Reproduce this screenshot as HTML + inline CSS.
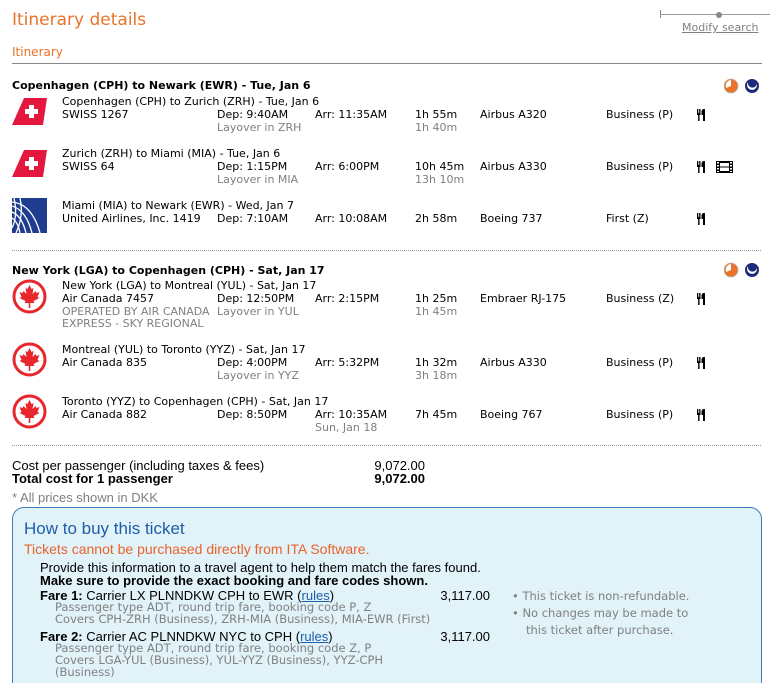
<!DOCTYPE html>
<html><head><meta charset="utf-8"><style>
*{margin:0;padding:0;box-sizing:border-box}
html,body{width:770px;height:683px;overflow:hidden}
body{background:#fff;font-family:"DejaVu Sans",Verdana,sans-serif;font-size:11px;color:#000;position:relative}
.a{position:absolute;white-space:nowrap;line-height:13px}
.g{color:#808080}
.b{font-weight:bold}
.o{color:#e8732a}
.dot{position:absolute;left:12px;width:749px;border-top:1px dotted #999}
.box{position:absolute;left:12px;top:507px;width:750px;height:190px;background:#e1f2f9;border:1px solid #3a7bbf;border-radius:12px}
.t{font-family:"Liberation Sans",Arial,sans-serif;font-size:13px;line-height:13px;position:absolute;white-space:nowrap}
.s{color:#808080;font-family:"DejaVu Sans",sans-serif;font-size:11.5px}
.r{text-align:right}
</style></head><body>
<div class="a o" style="left:12px;top:9px;font-size:17px;line-height:22px">Itinerary details</div>
<div style="position:absolute;left:660px;top:10px;width:1px;height:8px;background:#888"></div>
<div style="position:absolute;left:660px;top:14px;width:110px;height:1px;background:#999"></div>
<div style="position:absolute;left:716px;top:12px;width:6px;height:6px;border-radius:50%;background:#888"></div>
<div class="a g" style="left:682px;top:21px;text-decoration:underline">Modify search</div>
<div class="a o" style="left:12px;top:45px;font-size:12px;line-height:15px">Itinerary</div>
<div style="position:absolute;left:12px;top:63px;width:750px;height:1px;background:#888"></div>

<svg style="position:absolute;left:724px;top:78px" width="36" height="16">
<circle cx="7" cy="8" r="7" fill="#e8732a"/><path d="M7 8V2A6 6 0 0 0 2 10Z" fill="#fff"/><circle cx="7" cy="8" r="7" fill="none" stroke="#bbb" stroke-width="0.8"/>
<circle cx="28" cy="8" r="7" fill="#1d2a7a"/><path d="M24 4A5 5 0 1 0 33 6A4 4 0 1 1 24 4Z" fill="#fff"/>
</svg>
<svg style="position:absolute;left:724px;top:262px" width="36" height="16">
<circle cx="7" cy="8" r="7" fill="#e8732a"/><path d="M7 8V2A6 6 0 0 0 2 10Z" fill="#fff"/><circle cx="7" cy="8" r="7" fill="none" stroke="#bbb" stroke-width="0.8"/>
<circle cx="28" cy="8" r="7" fill="#1d2a7a"/><path d="M24 4A5 5 0 1 0 33 6A4 4 0 1 1 24 4Z" fill="#fff"/>
</svg>

<div class="a b" style="left:12px;top:79px">Copenhagen (CPH) to Newark (EWR) - Tue, Jan 6</div>

<svg style="position:absolute;left:12px;top:98px" width="36" height="28"><path d="M12 0H35L31 27H0Z" fill="#e4173e"/><path d="M17 7h5v4h4v5h-4v4h-5v-4h-4v-5h4Z" fill="#fff"/></svg>
<div class="a" style="left:62px;top:95px">Copenhagen (CPH) to Zurich (ZRH) - Tue, Jan 6</div>
<div class="a" style="left:62px;top:108px">SWISS 1267</div>
<div class="a" style="left:217px;top:108px">Dep: 9:40AM</div>
<div class="a g" style="left:217px;top:121px">Layover in ZRH</div>
<div class="a" style="left:315px;top:108px">Arr: 11:35AM</div>
<div class="a" style="left:415px;top:108px">1h 55m</div>
<div class="a g" style="left:415px;top:121px">1h 40m</div>
<div class="a" style="left:480px;top:108px">Airbus A320</div>
<div class="a" style="left:606px;top:108px">Business (P)</div>

<svg style="position:absolute;left:12px;top:150px" width="36" height="28"><path d="M12 0H35L31 27H0Z" fill="#e4173e"/><path d="M17 7h5v4h4v5h-4v4h-5v-4h-4v-5h4Z" fill="#fff"/></svg>
<div class="a" style="left:62px;top:147px">Zurich (ZRH) to Miami (MIA) - Tue, Jan 6</div>
<div class="a" style="left:62px;top:160px">SWISS 64</div>
<div class="a" style="left:217px;top:160px">Dep: 1:15PM</div>
<div class="a g" style="left:217px;top:173px">Layover in MIA</div>
<div class="a" style="left:315px;top:160px">Arr: 6:00PM</div>
<div class="a" style="left:415px;top:160px">10h 45m</div>
<div class="a g" style="left:415px;top:173px">13h 10m</div>
<div class="a" style="left:480px;top:160px">Airbus A330</div>
<div class="a" style="left:606px;top:160px">Business (P)</div>

<svg style="position:absolute;left:12px;top:198px" width="35" height="35"><rect width="35" height="35" fill="#1f3d8f"/><g stroke="#fff" stroke-width="1.3" fill="none"><path d="M0 8Q14 12 20 35"/><path d="M0 14Q10 18 14 35"/><path d="M0 20Q6 24 8 35"/><path d="M0 4Q20 6 28 35"/><path d="M2 0Q6 18 0 30"/><path d="M8 0Q12 18 4 35"/></g></svg>
<div class="a" style="left:62px;top:199px">Miami (MIA) to Newark (EWR) - Wed, Jan 7</div>
<div class="a" style="left:62px;top:212px">United Airlines, Inc. 1419</div>
<div class="a" style="left:217px;top:212px">Dep: 7:10AM</div>
<div class="a" style="left:315px;top:212px">Arr: 10:08AM</div>
<div class="a" style="left:415px;top:212px">2h 58m</div>
<div class="a" style="left:480px;top:212px">Boeing 737</div>
<div class="a" style="left:606px;top:212px">First (Z)</div>

<div class="dot" style="top:250px"></div>

<div class="a b" style="left:12px;top:264px">New York (LGA) to Copenhagen (CPH) - Sat, Jan 17</div>

<svg style="position:absolute;left:12px;top:279px" width="35" height="35"><circle cx="17.5" cy="17.5" r="15.5" fill="none" stroke="#e8272c" stroke-width="3"/><path d="M17.5 6l2 4 2-1-1 6 3-3 1 2 3-1-2 5 2 1-6 3 1 2h-4.2v5h-1.6v-5h-4.2l1-2-6-3 2-1-2-5 3 1 1-2 3 3-1-6 2 1Z" fill="#e8272c"/></svg>
<svg style="position:absolute;left:12px;top:342px" width="35" height="35"><circle cx="17.5" cy="17.5" r="15.5" fill="none" stroke="#e8272c" stroke-width="3"/><path d="M17.5 6l2 4 2-1-1 6 3-3 1 2 3-1-2 5 2 1-6 3 1 2h-4.2v5h-1.6v-5h-4.2l1-2-6-3 2-1-2-5 3 1 1-2 3 3-1-6 2 1Z" fill="#e8272c"/></svg>
<svg style="position:absolute;left:12px;top:394px" width="35" height="35"><circle cx="17.5" cy="17.5" r="15.5" fill="none" stroke="#e8272c" stroke-width="3"/><path d="M17.5 6l2 4 2-1-1 6 3-3 1 2 3-1-2 5 2 1-6 3 1 2h-4.2v5h-1.6v-5h-4.2l1-2-6-3 2-1-2-5 3 1 1-2 3 3-1-6 2 1Z" fill="#e8272c"/></svg>

<div class="a" style="left:62px;top:279px">New York (LGA) to Montreal (YUL) - Sat, Jan 17</div>
<div class="a" style="left:62px;top:292px">Air Canada 7457</div>
<div class="a g" style="left:62px;top:305px">OPERATED BY AIR CANADA</div>
<div class="a g" style="left:62px;top:317px">EXPRESS - SKY REGIONAL</div>
<div class="a" style="left:217px;top:292px">Dep: 12:50PM</div>
<div class="a g" style="left:217px;top:305px">Layover in YUL</div>
<div class="a" style="left:315px;top:292px">Arr: 2:15PM</div>
<div class="a" style="left:415px;top:292px">1h 25m</div>
<div class="a g" style="left:415px;top:305px">1h 45m</div>
<div class="a" style="left:480px;top:292px">Embraer RJ-175</div>
<div class="a" style="left:606px;top:292px">Business (Z)</div>

<div class="a" style="left:62px;top:343px">Montreal (YUL) to Toronto (YYZ) - Sat, Jan 17</div>
<div class="a" style="left:62px;top:356px">Air Canada 835</div>
<div class="a" style="left:217px;top:356px">Dep: 4:00PM</div>
<div class="a g" style="left:217px;top:369px">Layover in YYZ</div>
<div class="a" style="left:315px;top:356px">Arr: 5:32PM</div>
<div class="a" style="left:415px;top:356px">1h 32m</div>
<div class="a g" style="left:415px;top:369px">3h 18m</div>
<div class="a" style="left:480px;top:356px">Airbus A330</div>
<div class="a" style="left:606px;top:356px">Business (P)</div>

<div class="a" style="left:62px;top:395px">Toronto (YYZ) to Copenhagen (CPH) - Sat, Jan 17</div>
<div class="a" style="left:62px;top:408px">Air Canada 882</div>
<div class="a" style="left:217px;top:408px">Dep: 8:50PM</div>
<div class="a" style="left:315px;top:408px">Arr: 10:35AM</div>
<div class="a g" style="left:315px;top:421px">Sun, Jan 18</div>
<div class="a" style="left:415px;top:408px">7h 45m</div>
<div class="a" style="left:480px;top:408px">Boeing 767</div>
<div class="a" style="left:606px;top:408px">Business (P)</div>

<svg width="0" height="0" style="position:absolute"><defs><g id="m"><rect x="0" y="0" width="1.3" height="5"/><rect x="2.2" y="0" width="1.3" height="5"/><rect x="0" y="4" width="3.5" height="2"/><rect x="1.1" y="5" width="1.4" height="7"/><path d="M6 0h2v12h-2v-6h-1.5v-4Z"/></g><g id="f"><rect x="0" y="0" width="17" height="12" fill="#000"/><rect x="4" y="2" width="9" height="3.5" fill="#fff"/><rect x="4" y="6.5" width="9" height="3.5" fill="#fff"/><rect x="1" y="1" width="2" height="1.5" fill="#fff"/><rect x="1" y="4" width="2" height="1.5" fill="#fff"/><rect x="1" y="7" width="2" height="1.5" fill="#fff"/><rect x="1" y="10" width="2" height="1" fill="#fff"/><rect x="14" y="1" width="2" height="1.5" fill="#fff"/><rect x="14" y="4" width="2" height="1.5" fill="#fff"/><rect x="14" y="7" width="2" height="1.5" fill="#fff"/><rect x="14" y="10" width="2" height="1" fill="#fff"/></g></defs></svg>
<svg style="position:absolute;left:697px;top:109px" width="9" height="12"><use href="#m"/></svg>
<svg style="position:absolute;left:697px;top:161px" width="9" height="12"><use href="#m"/></svg>
<svg style="position:absolute;left:716px;top:161px" width="17" height="12"><use href="#f"/></svg>
<svg style="position:absolute;left:697px;top:213px" width="9" height="12"><use href="#m"/></svg>
<svg style="position:absolute;left:697px;top:293px" width="9" height="12"><use href="#m"/></svg>
<svg style="position:absolute;left:697px;top:357px" width="9" height="12"><use href="#m"/></svg>
<svg style="position:absolute;left:697px;top:409px" width="9" height="12"><use href="#m"/></svg>

<div class="dot" style="top:445px"></div>

<div class="t" style="left:12px;top:459px">Cost per passenger (including taxes &amp; fees)</div>
<div class="t r" style="left:325px;width:100px;top:459px">9,072.00</div>
<div class="t b" style="left:12px;top:472px">Total cost for 1 passenger</div>
<div class="t b r" style="left:325px;width:100px;top:472px">9,072.00</div>
<div class="t" style="left:12px;top:491px;color:#808080">* All prices shown in DKK</div>

<div class="box"></div>
<div class="t" style="left:24px;top:519px;font-size:17px;line-height:19px;color:#1c5ea8">How to buy this ticket</div>
<div class="t" style="left:24px;top:542px;font-size:14px;line-height:15px;color:#e8632a">Tickets cannot be purchased directly from ITA Software.</div>
<div class="t" style="left:40px;top:561px">Provide this information to a travel agent to help them match the fares found.</div>
<div class="t b" style="left:40px;top:574px">Make sure to provide the exact booking and fare codes shown.</div>
<div class="t" style="left:40px;top:589px"><b>Fare 1:</b> Carrier LX PLNNDKW CPH to EWR (<span style="color:#1c5ea8;text-decoration:underline">rules</span>)</div>
<div class="t r" style="left:390px;width:100px;top:589px">3,117.00</div>
<div class="t s" style="left:55px;top:601px">Passenger type ADT, round trip fare, booking code P, Z</div>
<div class="t s" style="left:55px;top:613px">Covers CPH-ZRH (Business), ZRH-MIA (Business), MIA-EWR (First)</div>
<div class="t" style="left:40px;top:630px"><b>Fare 2:</b> Carrier AC PLNNDKW NYC to CPH (<span style="color:#1c5ea8;text-decoration:underline">rules</span>)</div>
<div class="t r" style="left:390px;width:100px;top:630px">3,117.00</div>
<div class="t s" style="left:55px;top:642px">Passenger type ADT, round trip fare, booking code Z, P</div>
<div class="t s" style="left:55px;top:654px">Covers LGA-YUL (Business), YUL-YYZ (Business), YYZ-CPH</div>
<div class="t s" style="left:55px;top:666px">(Business)</div>
<div class="t s" style="left:512px;top:590px">• This ticket is non-refundable.</div>
<div class="t s" style="left:512px;top:607px">• No changes may be made to</div>
<div class="t s" style="left:526px;top:624px">this ticket after purchase.</div>
</body></html>
